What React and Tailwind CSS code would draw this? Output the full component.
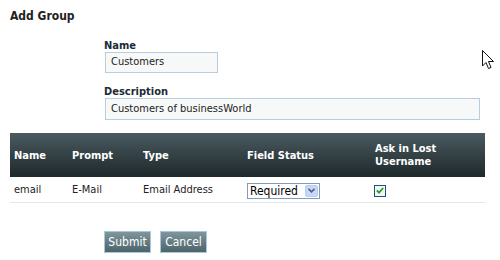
import React from 'react';

const font = { fontFamily: '"DejaVu Sans Condensed", "Liberation Sans", sans-serif' };

const columns = [
  { key: 'name', label: 'Name', width: 'w-[58px]' },
  { key: 'prompt', label: 'Prompt', width: 'w-[71px]' },
  { key: 'type', label: 'Type', width: 'w-[104px]' },
  { key: 'status', label: 'Field Status', width: 'w-[128px]' },
  { key: 'ask', label: 'Ask in Lost Username', width: 'w-[114px]' },
];

const Cursor = () => (
  <svg className="absolute left-[482px] top-[50px]" width="13" height="20" viewBox="0 0 13 20">
    <path
      d="M0.5 0.5 L0.5 16 L4 12.5 L6.5 18.5 L9 17.5 L6.5 11.5 L11.5 11.5 Z"
      fill="#fff"
      stroke="#111"
      strokeWidth="1"
      strokeLinejoin="round"
    />
  </svg>
);

const SelectBox = () => (
  <div className="flex h-[16px] w-[73px] items-center border border-[#7f9db9] bg-white">
    <span className="flex-1 pl-[2px] text-[12px] leading-[14px] text-black">Required</span>
    <span className="mr-[1px] flex h-[12px] w-[13px] items-center justify-center rounded-[2px] border border-[#b9cbee] bg-[#c6d7f8]">
      <svg width="7" height="5" viewBox="0 0 7 5">
        <path d="M0.5 0.8 L3.5 3.8 L6.5 0.8" fill="none" stroke="#4d6185" strokeWidth="1.6" />
      </svg>
    </span>
  </div>
);

const CheckBox = () => (
  <span className="flex h-[12px] w-[12px] items-center justify-center border border-[#1c5180] bg-[#f4f6f4]">
    <svg width="8" height="7" viewBox="0 0 8 7">
      <path d="M0.8 3.4 L3 5.6 L7.2 1" fill="none" stroke="#21a121" strokeWidth="1.8" />
    </svg>
  </span>
);

export default function App() {
  return (
    <div className="relative h-[260px] w-[500px] overflow-hidden bg-white px-[10px] pt-[8px]" style={font}>
      <h1 className="text-[12px] font-bold leading-[16px] text-[#222]">Add Group</h1>

      {/* Form fields */}
      <div className="ml-[94px]">
        <label className="mt-[15px] block text-[11px] font-bold leading-[13px] text-[#1b2a38]">Name</label>
        <div className="ml-[1px] flex h-[21px] w-[113px] items-center border border-[#b7cde0] bg-[#f7f9f9] px-[5px] text-[11px] text-[#222]">
          Customers
        </div>
        <label className="mt-[12px] block text-[11px] font-bold leading-[13px] text-[#1b2a38]">Description</label>
        <div className="ml-[1px] flex h-[22px] w-[375px] items-center border border-[#b7cde0] bg-[#f7f9f9] px-[5px] text-[11px] text-[#222]">
          Customers of businessWorld
        </div>
      </div>

      {/* Table */}
      <div className="mt-[13px] w-[475px]">
        <div className="flex h-[44px] items-center bg-gradient-to-b from-[#4b5b61] to-[#1e292b] text-[11px] font-bold leading-[13px] text-white">
          {columns.map((c) => (
            <div key={c.key} className={`${c.width} shrink-0 pl-[4px]`}>
              {c.key === 'ask' ? (
                <span className="block w-[70px]">Ask in Lost Username</span>
              ) : (
                c.label
              )}
            </div>
          ))}
        </div>
        <div className="flex h-[26px] items-center border-b border-[#e4e8ea] pt-[2px] text-[11px] text-[#222]">
          <div className="w-[58px] shrink-0 pl-[4px]">email</div>
          <div className="w-[71px] shrink-0 pl-[4px]">E-Mail</div>
          <div className="w-[104px] shrink-0 pl-[4px]">Email Address</div>
          <div className="w-[128px] shrink-0 pl-[4px]">
            <SelectBox />
          </div>
          <div className="w-[114px] shrink-0 pl-[3px]">
            <CheckBox />
          </div>
        </div>
      </div>

      {/* Buttons */}
      <div className="ml-[94px] mt-[28px] flex gap-[9px]">
        <button className="h-[22px] w-[47px] border border-[#a9c6db] bg-gradient-to-b from-[#7f969d] to-[#4d646b] text-[12px] text-white">
          Submit
        </button>
        <button className="h-[22px] w-[47px] border border-[#a9c6db] bg-gradient-to-b from-[#7f969d] to-[#4d646b] text-[12px] text-white">
          Cancel
        </button>
      </div>

      <Cursor />
    </div>
  );
}
